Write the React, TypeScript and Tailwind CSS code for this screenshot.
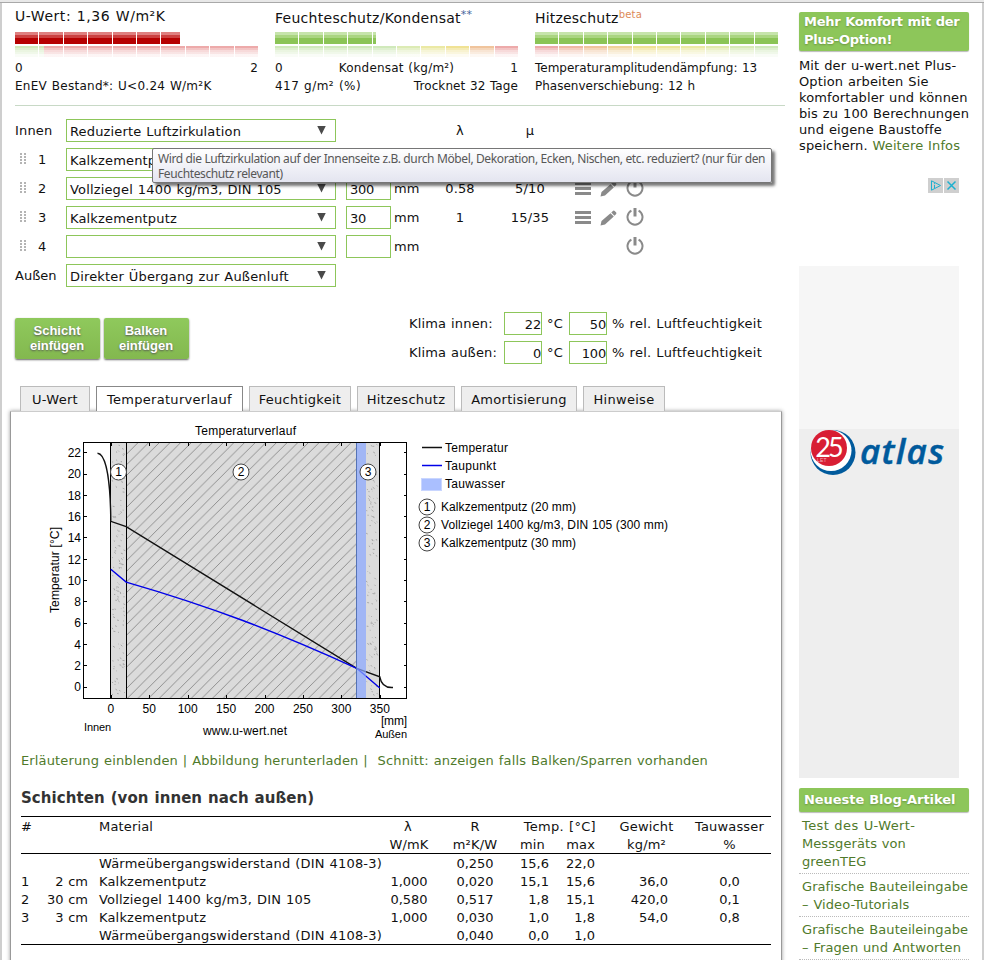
import React from 'react';

const green = ['#d0e9bb', '#d0e9bb', '#d0e9bb', '#d0e9bb', '#d0e9bb', '#dcebb4', '#ebe9a4', '#f0e294', '#f0c49c', '#edaaaa'];
const heat = ['#edaaaa', '#efb8a2', '#f0c49c', '#f0d298', '#f0e294', '#eee69c', '#ebe9a4', '#e2eaae', '#d8eab6', '#d0e9bb'];
const red = ['#d0e9bb', '#edaaaa', '#edaaaa', '#edaaaa', '#edaaaa', '#edaaaa', '#edaaaa', '#edaaaa', '#edaaaa', '#edaaaa'];

function Meter({ value, tone, scale }: { value: number; tone: 'red' | 'green'; scale: string[] }) {
  const fill =
    tone === 'red'
      ? 'bg-[linear-gradient(to_bottom,#df7f7f_0_3px,#cc4040_3px_6px,#b60000_6px_12px)]'
      : 'bg-[linear-gradient(to_bottom,#c6e4ab_0_3px,#aad581_3px_6px,#8bc456_6px_12px)]';
  return (
    <div className="w-[243px]">
      <div className="overflow-hidden" style={{ width: value }}>
        <div className="grid h-3 w-[243px] grid-cols-10 gap-px">
          {scale.map((_, i) => (
            <div key={i} className={fill} />
          ))}
        </div>
      </div>
      <div className="relative mt-0.5 grid h-[11px] grid-cols-10 gap-px">
        {scale.map((c, i) => (
          <div key={i} className="flex" style={{ backgroundColor: c }}>
            {tone === 'red' && i === 1 && <div className="w-[5px] bg-[#d0e9bb]" />}
          </div>
        ))}
        <div className="absolute inset-0 bg-[linear-gradient(to_bottom,transparent_0_2px,#ffffff50_2px_4px,#ffffff90_4px_6px,#ffffffb0_6px_8px,#ffffffe0_8px_11px)]" />
      </div>
    </div>
  );
}

function Select({ children }: { children?: React.ReactNode }) {
  return (
    <div className="flex h-[23px] w-[270px] items-center justify-between border border-[#8dc65a] pr-[9px] pl-[3px]">
      <span className="pt-0.5">{children}</span>
      <span className="-mt-px h-[9px] w-[9px] bg-[#4a4a4a] [clip-path:polygon(0_0,100%_0,50%_100%)]" />
    </div>
  );
}

function Grip() {
  return (
    <div className="-mt-0.5 grid grid-cols-[2px_2px] gap-x-0.5 gap-y-px">
      {Array.from({ length: 8 }, (_, i) => (
        <i key={i} className="h-0.5 w-0.5 bg-[#b4b4b4]" />
      ))}
    </div>
  );
}

function Power() {
  return (
    <svg width="18" height="19" viewBox="0 0 18 19" fill="none" stroke="#8a8a8a">
      <path d="M5.4 2.6A7.5 7.5 0 1 0 12.6 2.6" strokeWidth="2" />
      <path d="M9 0V8.5" strokeWidth="3" />
    </svg>
  );
}

function Layer({ n, name, d, unit = 'mm', lambda, mu }: { n: number; name?: string; d?: string; unit?: string; lambda?: string; mu?: string }) {
  return (
    <div className="flex h-[29px] items-center">
      <div className="ml-[5px] w-[18px]"><Grip /></div>
      <div className="w-7 pt-px">{n}</div>
      <Select>{name}</Select>
      <div className="ml-[10px] flex h-[23px] w-[45px] items-center border border-[#8dc65a] pt-0.5 pl-[3px] tracking-[-0.3px]">{d}</div>
      <div className="w-[34px] pt-px pl-[3px]">{unit}</div>
      <div className="w-[70px] pt-px text-center">{lambda}</div>
      <div className="w-[70px] pt-px text-center">{mu}</div>
      <div className="ml-[10px] flex w-[51px] items-center gap-[9px]">
        {name && (
          <>
            <svg width="16" height="13" viewBox="0 0 16 13" fill="#8a8a8a">
              <path d="M0 0h16v3H0zM0 5h16v3H0zM0 10h16v3H0z" />
            </svg>
            <svg width="17" height="16" viewBox="0 0 17 16" fill="#8a8a8a">
              <path d="M0.5 15.5 1.5 11 10.5 3.2 13.8 6.6 5 14.6ZM11.3 2.5 13.2 0.7Q14 0.2 14.7 0.9L16.2 2.6Q16.8 3.4 16 4.2L14.4 5.8Z" />
            </svg>
          </>
        )}
      </div>
      <div><Power /></div>
    </div>
  );
}

function Button({ a }: { a: string }) {
  return (
    <div className="h-[41px] w-[85px] rounded-[2px] bg-linear-to-b from-[#8fc95c] to-[#83b84f] pt-[5px] text-center font-['Liberation_Sans',Arial,sans-serif] text-[13px] leading-[15px] font-bold tracking-normal text-white shadow-[0_1px_2px_#666] [text-shadow:0_1px_2px_#555]">
      {a}
      <br />
      einfügen
    </div>
  );
}

function Klima({ label, t, h }: { label: string; t: string; h: string }) {
  return (
    <div className="flex h-[29px] items-center whitespace-nowrap">
      <div className="w-[95px] pt-px">{label}</div>
      <div className="h-[23px] w-[38px] border border-[#8dc65a] pt-[3px] text-right leading-[18px] tracking-[-0.2px]">{t}</div>
      <div className="w-[27px] pt-px pl-[5px]">°C</div>
      <div className="h-[23px] w-[38px] border border-[#8dc65a] pt-[3px] text-right leading-[18px] tracking-[-0.2px]">{h}</div>
      <div className="pt-px pl-[5px] tracking-[0.25px]">% rel. Luftfeuchtigkeit</div>
    </div>
  );
}

const tabs: [string, string][] = [
  ['U-Wert', 'w-[70px]'],
  ['Temperaturverlauf', 'w-[147px]'],
  ['Feuchtigkeit', 'w-[102px]'],
  ['Hitzeschutz', 'w-[98px]'],
  ['Amortisierung', 'w-[116px]'],
  ['Hinweise', 'w-[82px]'],
];

const X = (mm: number) => 110.8 + mm * 0.7686;
const Y = (t: number) => 687.5 - t * 10.65;

// Small deterministic marks for the plaster texture.
function speckles(x0: number, x1: number, seed: number) {
  let s = seed;
  const rnd = () => (s = (s * 16807) % 2147483647) / 2147483647;
  let d = '';
  for (let i = 0; i < (x1 - x0) * 9; i++) {
    const x = x0 + rnd() * (x1 - x0 - 2);
    const y = 444 + rnd() * 252;
    d += `M${x.toFixed(1)} ${y.toFixed(1)}l${(rnd() * 2).toFixed(1)} ${(rnd() * 1.6).toFixed(1)}`;
  }
  return d;
}

function Badge({ x, y, n }: { x: number; y: number; n: number }) {
  return (
    <g>
      <circle cx={x} cy={y} r="8" fill="#fff" stroke="#444" />
      <text x={x} y={y + 4.3} textAnchor="middle">{n}</text>
    </g>
  );
}

function Chart() {
  const ys = [0, 2, 4, 6, 8, 10, 12, 14, 16, 18, 20, 22];
  const xs = [0, 50, 100, 150, 200, 250, 300, 350];
  return (
    <svg width="770" height="330" viewBox="11 412 770 330" className="block font-['Liberation_Sans',Arial,sans-serif] text-[12px] tracking-normal [word-spacing:0]">
      <defs>
        <pattern id="hatch" width="10.65" height="10.65" patternUnits="userSpaceOnUse" x="127" y="443">
          <path d="M-1 11.65 11.65 -1M-1 1 1 -1M9.65 11.65 11.65 9.65" stroke="#7d7d7d" strokeWidth="0.8" />
        </pattern>
      </defs>
      <text x="195" y="434.5" textLength="101">Temperaturverlauf</text>
      <rect x={111} y="443" width="269" height="255" fill="#dbdbdb" />
      <rect x="127" y="443" width="230" height="255" fill="url(#hatch)" />
      <path d={speckles(112, 126, 77)} stroke="#a0a0a0" strokeWidth="0.9" />
      <path d={speckles(366, 379, 991)} stroke="#a0a0a0" strokeWidth="0.9" />
      <path d="M110.5 443V698M126.5 443V698M379.5 443V698" stroke="#000" />
      <g fill="none" strokeWidth="1.4">
        <path d={`M97.5 ${Y(22)}C107 454 110.5 485 110.8 ${Y(15.6)}L${X(20)} ${Y(15.1)} ${X(320)} ${Y(1.8)} ${X(350)} ${Y(1)}C381 684 385 688 393 687.5`} stroke="#111" />
        <path d={`M${X(0)} ${Y(11.1)} ${X(20)} ${Y(9.9)}C${X(130)} ${Y(7.6)} ${X(210)} ${Y(5.4)} ${X(320)} ${Y(1.8)}L${X(350)} 688`} stroke="#0000e8" />
      </g>
      <rect x="356" y="443" width="10" height="256" fill="#8aa8ff" fillOpacity="0.72" />
      <path d="M356.5 443V698" stroke="#5573b5" />
      <rect x="83.5" y="442.5" width="323" height="256" fill="none" stroke="#000" />
      {ys.map((v) => (
        <g key={v}>
          <path d={`M84 ${Math.round(Y(v)) - 0.5}h3M404 ${Math.round(Y(v)) - 0.5}h3`} stroke="#000" />
          <text x="81" y={Y(v) + 3.8} textAnchor="end">{v}</text>
        </g>
      ))}
      {xs.map((v) => (
        <g key={v}>
          <path d={`M${Math.round(X(v)) + 0.5} 443v3M${Math.round(X(v)) + 0.5} 698v-3`} stroke="#000" />
          <text x={X(v)} y="713" textAnchor="middle">{v}</text>
        </g>
      ))}
      <Badge x={118.5} y={472} n={1} />
      <Badge x={241} y={472} n={2} />
      <Badge x={368} y={472} n={3} />
      <text transform="translate(59 613) rotate(-90)" textLength="86">Temperatur [°C]</text>
      <text x="84" y="731" className="text-[11px]" textLength="27">Innen</text>
      <text x="203" y="735" textLength="84">www.u-wert.net</text>
      <text x="381" y="725" textLength="26">[mm]</text>
      <text x="375" y="738" className="text-[11px]" textLength="32">Außen</text>
      <path d="M422 447.5h20" stroke="#111" strokeWidth="1.5" />
      <path d="M422 465.5h20" stroke="#0000e8" strokeWidth="1.5" />
      <rect x="421.5" y="478.5" width="20" height="12" fill="#aabfff" stroke="#c9d6ff" />
      <text x="445" y="452" textLength="63">Temperatur</text>
      <text x="445" y="470" textLength="51">Taupunkt</text>
      <text x="445" y="488" textLength="60">Tauwasser</text>
      <Badge x={427} y={507} n={1} />
      <Badge x={427} y={525} n={2} />
      <Badge x={427} y={543} n={3} />
      <text x="441" y="511" textLength="135">Kalkzementputz (20 mm)</text>
      <text x="441" y="529" textLength="227">Vollziegel 1400 kg/m3, DIN 105 (300 mm)</text>
      <text x="441" y="547" textLength="135">Kalkzementputz (30 mm)</text>
    </svg>
  );
}

const rows = [
  ['', '', 'Wärmeübergangswiderstand (DIN 4108-3)', '', '0,250', '15,6', '22,0', '', ''],
  ['1', '2 cm', 'Kalkzementputz', '1,000', '0,020', '15,1', '15,6', '36,0', '0,0'],
  ['2', '30 cm', 'Vollziegel 1400 kg/m3, DIN 105', '0,580', '0,517', '1,8', '15,1', '420,0', '0,1'],
  ['3', '3 cm', 'Kalkzementputz', '1,000', '0,030', '1,0', '1,8', '54,0', '0,8'],
  ['', '', 'Wärmeübergangswiderstand (DIN 4108-3)', '', '0,040', '0,0', '1,0', '', ''],
];
const cols = 'grid grid-cols-[20px_47px_296px_50px_82px_33px_46px_103px_63px] leading-[18px] whitespace-nowrap';

function Table() {
  return (
    <div className="w-[750px] border-y border-black">
      <div className="h-[37px] border-b border-black pt-px">
        <div className={cols}>
          <div>#</div>
          <div />
          <div className="pl-[11px]">Material</div>
          <div className="-ml-[2px] text-center">λ</div>
          <div className="text-center">R</div>
          <div className="col-span-2 -mr-px text-right tracking-[0.3px]">Temp. [°C]</div>
          <div className="text-center">Gewicht</div>
          <div className="-mx-5 text-center">Tauwasser</div>
        </div>
        <div className={cols}>
          <div className="col-span-3" />
          <div className="text-center">W/mK</div>
          <div className="text-center">m²K/W</div>
          <div className="text-center">min</div>
          <div className="text-right">max</div>
          <div className="text-center">kg/m²</div>
          <div className="text-center">%</div>
        </div>
      </div>
      <div className="h-[90px] pt-px">
        {rows.map((r, i) => (
          <div key={i} className={cols}>
            <div>{r[0]}</div>
            <div className="text-right tracking-normal">{r[1]}</div>
            <div className="pl-[11px] tracking-[0.18px]">{r[2]}</div>
            <div className="text-center tracking-normal">{r[3]}</div>
            <div className="text-center tracking-normal">{r[4]}</div>
            <div className="text-right tracking-normal">{r[5]}</div>
            <div className="text-right tracking-normal">{r[6]}</div>
            <div className="pr-[30px] text-right tracking-normal">{r[7]}</div>
            <div className="text-center tracking-normal">{r[8]}</div>
          </div>
        ))}
      </div>
    </div>
  );
}

export default function App() {
  return (
    <div className="flex h-[960px] w-[984px] flex-col overflow-hidden bg-white font-['DejaVu_Sans',Verdana,sans-serif] text-[13px] tracking-[0.16px] text-[#111] [word-spacing:0.6px]">
      <div className="h-[3px] shrink-0 border-b border-[#a9a9a9] bg-[#e8e8e8]" />
      <div className="flex h-[957px] border-x-2 border-[#cecece]">
        <main className="w-[783px] shrink-0">
          <div className="ml-[13px] flex h-[103px] w-[770px] border-b border-[#c8d9c6] text-[12px] leading-[18px] tracking-normal whitespace-nowrap">
            <div className="w-[260px]">
              <div className="h-[29px] pt-1 text-[14px] tracking-[0.55px]">U-Wert: 1,36 W/m²K</div>
              <Meter value={165} tone="red" scale={red} />
              <div className="mt-[2px] flex w-[243px] justify-between"><span>0</span><span>2</span></div>
              <div className="tracking-[0.27px]">EnEV Bestand*: U&lt;0.24 W/m²K</div>
            </div>
            <div className="w-[260px]">
              <div className="h-[29px] pt-1.5 text-[14px] tracking-[0.28px]">
                Feuchteschutz/Kondensat<sup className="text-[11px] text-[#46679c]">**</sup>
              </div>
              <Meter value={101} tone="green" scale={green} />
              <div className="mt-[2px] flex w-[243px] justify-between"><span>0</span><span className="tracking-[0.2px]">Kondensat (kg/m²)</span><span>1</span></div>
              <div className="flex w-[243px] justify-between"><span className="tracking-[0.45px]">417 g/m² (%)</span><span className="tracking-[0.1px]">Trocknet 32 Tage</span></div>
            </div>
            <div>
              <div className="h-[29px] pt-1.5 text-[14px] tracking-[0.2px]">
                Hitzeschutz<sup className="text-[10px] text-[#dd8a58]">beta</sup>
              </div>
              <Meter value={243} tone="green" scale={heat} />
              <div className="mt-[2px]">Temperaturamplitudendämpfung: 13</div>
              <div>Phasenverschiebung: 12 h</div>
            </div>
          </div>

          <div className="relative mt-[10px] ml-[13px]">
            <div className="flex h-[29px] items-center">
              <div className="w-[51px] pt-px">Innen</div>
              <Select>Reduzierte Luftzirkulation</Select>
              <div className="ml-[89px] w-[70px] text-center">λ</div>
              <div className="w-[70px] text-center">µ</div>
            </div>
            <Layer n={1} name="Kalkzementputz" unit="" />
            <Layer n={2} name="Vollziegel 1400 kg/m3, DIN 105" d="300" lambda="0.58" mu="5/10" />
            <Layer n={3} name="Kalkzementputz" d="30" lambda="1" mu="15/35" />
            <Layer n={4} />
            <div className="flex h-[29px] items-center">
              <div className="w-[51px] pt-px tracking-normal">Außen</div>
              <Select>Direkter Übergang zur Außenluft</Select>
            </div>
            <div className="absolute top-8 left-[137px] h-[35px] w-[620px] rounded-[2px] border border-[#767676] bg-linear-to-b from-white to-[#e4e5f0] pt-[2px] pl-[5px] font-['Noto_Sans','Open_Sans',sans-serif] text-[12px] leading-[15px] tracking-[-0.38px] whitespace-nowrap text-[#575757] shadow-[3px_3px_3px_#0008] [word-spacing:0]">
              Wird die Luftzirkulation auf der Innenseite z.B. durch Möbel, Dekoration, Ecken, Nischen, etc. reduziert? (nur für den
              <br />
              Feuchteschutz relevant)
            </div>
          </div>

          <div className="mt-[19px] ml-[12.5px] flex">
            <div className="mt-[9px] flex gap-1">
              <Button a="Schicht" />
              <Button a="Balken" />
            </div>
            <div className="ml-[220.5px]">
              <Klima label="Klima innen:" t="22" h="50" />
              <Klima label="Klima außen:" t="0" h="100" />
            </div>
          </div>

          <div className="mt-[19px] ml-[18px] flex gap-1.5">
            {tabs.map(([t, w], i) => (
              <div
                key={t}
                className={`${w} flex h-[25px] items-center justify-center border border-b-0 pt-0.5 tracking-[0.28px] ${i === 1 ? 'relative z-10 border-[#888] bg-white' : 'border-[#bbb] bg-[#eee]'}`}
              >
                {t}
              </div>
            ))}
          </div>
          <div className="ml-2 h-[560px] w-[772px] border-x border-t border-x-[#999] border-t-[#ccc] bg-white shadow-[0_0_4px_#0006]">
            <Chart />
            <div className="mt-[9px] ml-[10px] text-[13px] leading-[20px] tracking-[0.145px] whitespace-pre text-[#4f7a2b]">
              Erläuterung einblenden | Abbildung herunterladen |  Schnitt: anzeigen falls Balken/Sparren vorhanden
            </div>
            <h2 className="mt-4 mb-[7px] ml-[10px] text-[15px] leading-[22px] font-bold tracking-[0.07px] text-[#333]">Schichten (von innen nach außen)</h2>
            <div className="ml-[10px]"><Table /></div>
          </div>
        </main>

        <aside className="ml-[14px] w-[172px] shrink-0 whitespace-nowrap">
          <div className="mt-[9px] h-[39px] w-[170px] rounded-[2px] bg-[#8dc65a] pt-px pl-[5px] text-[13px] leading-[18px] font-bold tracking-[-0.28px] text-white shadow-[0_1px_1px_#bbb] [text-shadow:0_1px_2px_#6a9440]">
            Mehr Komfort mit der<br />Plus-Option!
          </div>
          <p className="mt-[7px] leading-[16px] tracking-[0.12px]">
            Mit der u-wert.net Plus-<br />Option arbeiten Sie<br />komfortabler und können<br />bis zu 100 Berechnungen<br />und eigene Baustoffe<br />speichern. <span className="text-[#4f7a2b]">Weitere Infos</span>
          </p>
          <div className="mt-[24px] flex w-[160px] justify-end gap-px">
            <svg width="15" height="15" viewBox="0 0 15 15" fill="none" stroke="#1eb0cf" className="bg-[#cfcfcf]">
              <path d="M3.5 2.8V12.2L12.5 7.5ZM6.5 6.8V10M6.5 4.8V5.8" />
            </svg>
            <svg width="15" height="15" viewBox="0 0 15 15" fill="none" stroke="#1eb0cf" strokeWidth="1.5" className="bg-[#cfcfcf]">
              <path d="M3.5 3.5 11.5 11.5M11.5 3.5 3.5 11.5" />
            </svg>
          </div>
          <div className="mt-[73px] h-[512px] w-[160px] bg-[linear-gradient(#f6f6f6_0_163px,#eee_163px)] pt-[153px]">
            <svg width="160" height="70" viewBox="799 419 160 70">
              <circle cx="833" cy="452.5" r="22.5" fill="#005a9c" />
              <circle cx="831" cy="450.5" r="20.5" fill="#fff" />
              <circle cx="829" cy="448" r="18" fill="#d81e34" />
              <text x="828" y="457" textAnchor="middle" className="font-['Lato',sans-serif] text-[27px] font-normal not-italic tracking-[-3px]" fill="#fff">25</text>
              <text x="817" y="461.5" className="font-['Liberation_Sans',sans-serif] text-[5px]" fill="#f3b5bb">LET</text>
              <text x="860" y="463.5" textLength="84" className="font-['Open_Sans',sans-serif] text-[35px] font-semibold tracking-normal italic" stroke="#005a9c" strokeWidth="0.5" fill="#005a9c">atlas</text>
            </svg>
          </div>
          <div className="mt-[10px] h-6 w-[170px] rounded-[2px] bg-[#8dc65a] pl-[5px] leading-[24px] font-bold tracking-[-0.05px] text-white shadow-[0_1px_1px_#bbb] [text-shadow:0_1px_2px_#6a9440]">
            Neueste Blog-Artikel
          </div>
          <ul className="mt-[5px] w-[170px] leading-[18px] tracking-[0.08px] text-[#4f7a2b]">
            <li className="mb-1 border-b border-dotted border-[#bbb] pb-[2px] pl-[3px]"><span className="tracking-[0.4px]">Test des U-Wert-</span><br />Messgeräts von<br />greenTEG</li>
            <li className="mb-1 border-b border-dotted border-[#bbb] pb-[2px] pl-[3px]">Grafische Bauteileingabe<br />– Video-Tutorials</li>
            <li className="border-b border-dotted border-[#bbb] pb-[2px] pl-[3px]">Grafische Bauteileingabe<br />– Fragen und Antworten</li>
          </ul>
        </aside>
      </div>
    </div>
  );
}
